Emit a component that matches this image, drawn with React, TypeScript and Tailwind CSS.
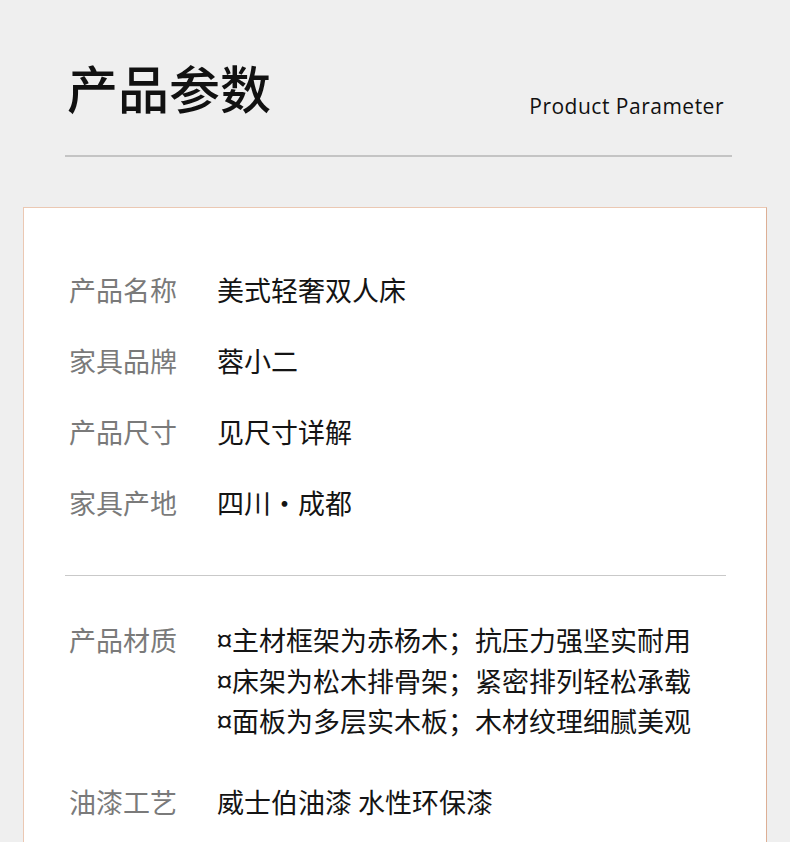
const rows = [
  { label: '产品名称', value: '美式轻奢双人床' },
  { label: '家具品牌', value: '蓉小二' },
  { label: '产品尺寸', value: '见尺寸详解' },
  { label: '家具产地', value: '四川·成都' },
];

const material = [
  '¤主材框架为赤杨木；抗压力强坚实耐用',
  '¤床架为松木排骨架；紧密排列轻松承载',
  '¤面板为多层实木板；木材纹理细腻美观',
];

const cjk = { fontFamily: '"Noto Sans CJK SC", "Noto Sans", sans-serif' };

export default function App() {
  return (
    <div className="h-[842px] w-[790px] overflow-hidden bg-[#efefef]" style={cjk}>
      {/* header */}
      <div className="pl-[65px] pr-[58px] pt-[52px]">
        <div className="flex items-end justify-between pl-[2px] pr-[8px]">
          <h1 className="text-[51px] font-medium leading-[70px] text-[#111]">产品参数</h1>
          <span
            className="mb-[4px] text-[21px] leading-[24px] tracking-[0.5px] text-[#111]"
            style={{ fontFamily: '"Open Sans", sans-serif' }}
          >
            Product Parameter
          </span>
        </div>
        <div className="mt-[33px] h-[2px] bg-[#c4c4c4]" />
      </div>

      {/* card */}
      <div className="mx-[23px] mt-[50px] h-[660px] border border-[#ebc8b3] border-r-[#ddaf95] bg-white">
        <div className="pl-[45px] pt-[47px]">
          {rows.map((r) => (
            <div key={r.label} className="flex h-[71px] items-center text-[27px]">
              <span className="w-[148px] text-[#7a7a7a]">{r.label}</span>
              <span className="text-[#141414]">{r.value}</span>
            </div>
          ))}
        </div>

        <div className="ml-[41px] mr-[40px] mt-[36px] h-px bg-[#c9c9c9]" />

        <div className="mt-[44px] flex pl-[45px] text-[27px] leading-[40.5px]">
          <span className="w-[148px] text-[#7a7a7a]">产品材质</span>
          <div className="text-[#141414]">
            {material.map((m) => (
              <div key={m}>{m}</div>
            ))}
          </div>
        </div>

        <div className="mt-[40px] flex h-[41px] items-center pl-[45px] text-[27px]">
          <span className="w-[148px] text-[#7a7a7a]">油漆工艺</span>
          <span className="text-[#141414]">威士伯油漆 水性环保漆</span>
        </div>
      </div>
    </div>
  );
}
